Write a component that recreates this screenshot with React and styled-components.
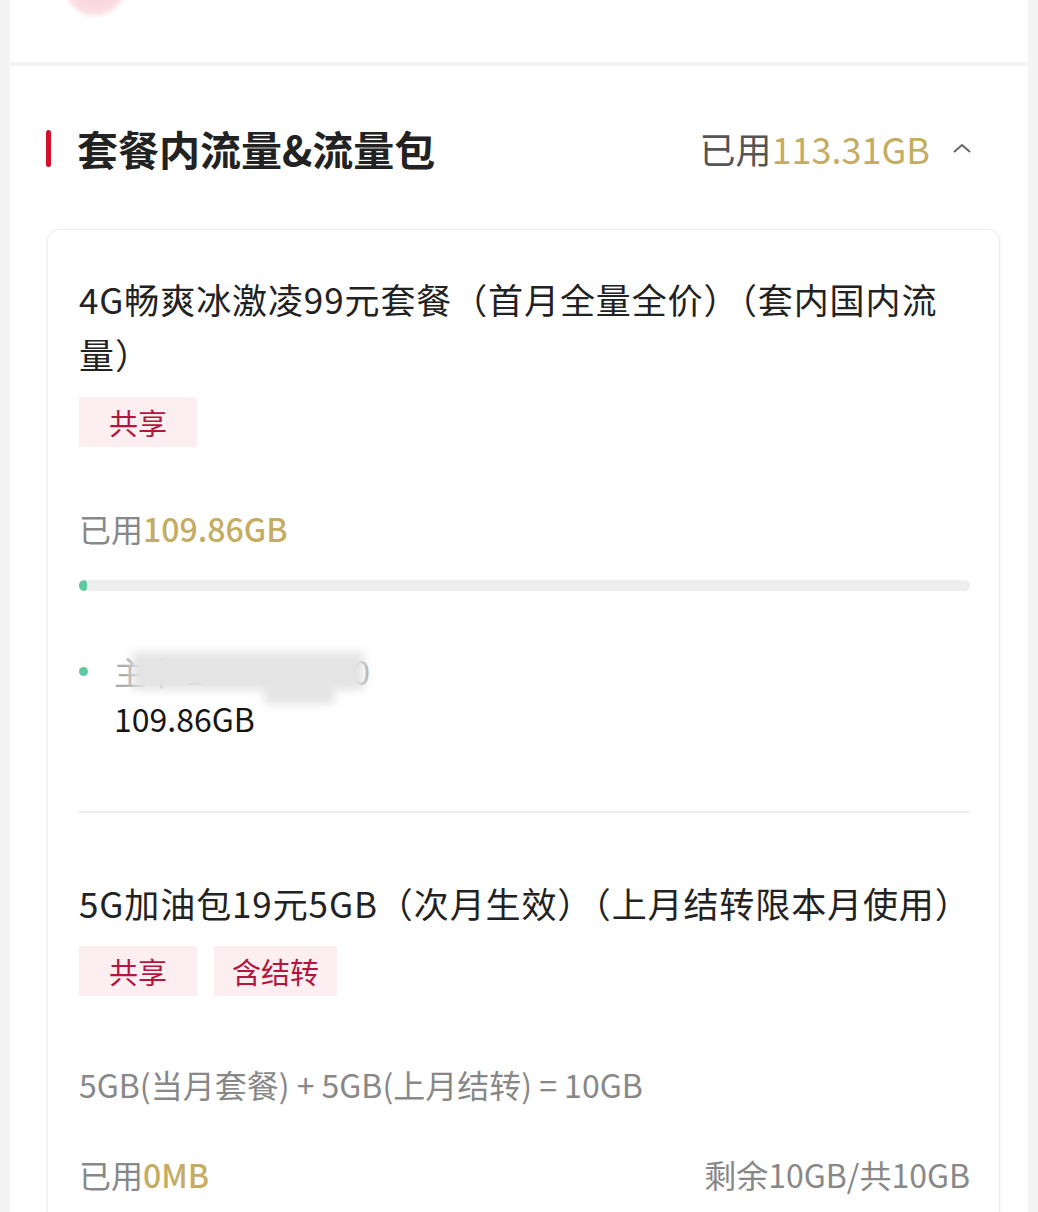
import styled, { createGlobalStyle } from "styled-components";

const GlobalStyle = createGlobalStyle`
  body {
    margin: 0;
    background: #f4f4f4;
    font-family: "Noto Sans CJK SC", "Noto Sans", sans-serif;
  }
`;

const Page = styled.div`
  width: 1038px;
  padding: 0 10px;
  box-sizing: border-box;
`;

const TopCard = styled.div`
  height: 62px;
  background: #fff;
  overflow: hidden;
`;

const Avatar = styled.div`
  width: 62px;
  height: 62px;
  margin: -46px 0 0 54px;
  border-radius: 50%;
  background: radial-gradient(circle at 50% 40%, #f7c9d2 0%, #f9dbe1 60%, #fdf1f3 100%);
  filter: blur(2px);
`;

const Section = styled.section`
  margin-top: 4px;
  background: #fff;
  padding: 60px 28px 60px 36px;
`;

const Header = styled.div`
  display: flex;
  align-items: center;
  justify-content: space-between;
  height: 44px;
  padding-right: 28px;
`;

const HeaderTitle = styled.h2`
  display: flex;
  align-items: center;
  gap: 26px;
  margin: 0;
  font-size: 41px;
  font-weight: 700;
  color: #222;
  &::before {
    content: "";
    width: 5px;
    height: 37px;
    border-radius: 3px;
    background: #d3112e;
  }
`;

const HeaderUsage = styled.div`
  display: flex;
  align-items: center;
  gap: 22px;
  font-size: 36px;
  color: #555;
`;

const Gold = styled.span`
  color: #c4ad62;
  font-weight: ${(p) => (p.$strong ? 500 : 400)};
`;

const Card = styled.div`
  margin: 59px 0 0 1px;
  border: 1px solid #ececec;
  border-radius: 12px;
  box-shadow: 0 0 6px rgba(0, 0, 0, 0.04);
  padding: 41px 29px 0 31px;
`;

const Item = styled.div`
  padding-bottom: ${(p) => p.$pb}px;
  & + & {
    border-top: 2px solid #eeeeee;
    padding-top: 62px;
  }
`;

const ItemTitle = styled.div`
  font-size: 35px;
  line-height: 55px;
  letter-spacing: 0.9px;
  color: #222;
  white-space: pre-line;
`;

const Tags = styled.div`
  display: flex;
  gap: 17px;
  margin-top: 16px;
`;

const Tag = styled.span`
  min-width: 118px;
  height: 50px;
  padding: 0 18px;
  box-sizing: border-box;
  display: flex;
  align-items: center;
  justify-content: center;
  background: #fdeef1;
  color: #b1163f;
  font-size: 29px;
`;

const Line = styled.div`
  display: flex;
  justify-content: space-between;
  margin-top: ${(p) => p.$mt}px;
  font-size: 32px;
  line-height: 42px;
  color: #888;
`;

const Bar = styled.div`
  margin-top: 31px;
  height: 11px;
  border-radius: 6px;
  background: #eeeeee;
  overflow: hidden;
`;

const BarFill = styled.div`
  height: 100%;
  border-radius: 6px;
  background: #5cc9a0;
`;

const Legend = styled.div`
  display: flex;
  gap: 26px;
  margin-top: 57px;
`;

const Dot = styled.span`
  flex: none;
  width: 9px;
  height: 9px;
  margin-top: 19px;
  border-radius: 50%;
  background: #5cc9a0;
`;

const LegendText = styled.div`
  position: relative;
  font-size: 32px;
  line-height: 47px;
`;

const LegendName = styled.div`
  color: #aaa;
`;

const LegendValue = styled.div`
  color: #151515;
`;

const Redact = styled.span`
  position: absolute;
  left: ${(p) => p.$x}px;
  top: ${(p) => p.$y}px;
  width: ${(p) => p.$w}px;
  height: ${(p) => p.$h}px;
  background: #e4e4e4;
  filter: blur(5px);
`;

function Chevron() {
  return (
    <svg width="20" height="12" viewBox="0 0 20 12">
      <polyline points="2,10 10,3 18,10" fill="none" stroke="#666" strokeWidth="2" />
    </svg>
  );
}

const items = [
  {
    title: "4G畅爽冰激凌99元套餐（首月全量全价）（套内国内流\n量）",
    tags: ["共享"],
  },
  {
    title: "5G加油包19元5GB（次月生效）（上月结转限本月使用）",
    tags: ["共享", "含结转"],
  },
];

export default function App() {
  return (
    <Page>
      <GlobalStyle />
      <TopCard>
        <Avatar />
      </TopCard>
      <Section>
        <Header>
          <HeaderTitle>套餐内流量&amp;流量包</HeaderTitle>
          <HeaderUsage>
            <span>
              已用<Gold>113.31GB</Gold>
            </span>
            <Chevron />
          </HeaderUsage>
        </Header>
        <Card>
          <Item $pb={69}>
            <ItemTitle>{items[0].title}</ItemTitle>
            <Tags>
              {items[0].tags.map((t) => (
                <Tag key={t}>{t}</Tag>
              ))}
            </Tags>
            <Line $mt={60}>
              <span>
                已用<Gold $strong>109.86GB</Gold>
              </span>
            </Line>
            <Bar>
              <BarFill style={{ width: "8px" }} />
            </Bar>
            <Legend>
              <Dot />
              <LegendText>
                <LegendName>主卡 1**********0</LegendName>
                <LegendValue>109.86GB</LegendValue>
                <Redact $x={18} $y={4} $w={232} $h={38} />
                <Redact $x={150} $y={30} $w={70} $h={26} />
              </LegendText>
            </Legend>
          </Item>
          <Item $pb={40}>
            <ItemTitle>{items[1].title}</ItemTitle>
            <Tags>
              {items[1].tags.map((t) => (
                <Tag key={t}>{t}</Tag>
              ))}
            </Tags>
            <Line $mt={67}>5GB(当月套餐) + 5GB(上月结转) = 10GB</Line>
            <Line $mt={48}>
              <span>
                已用<Gold $strong>0MB</Gold>
              </span>
              <span>剩余10GB/共10GB</span>
            </Line>
          </Item>
        </Card>
      </Section>
    </Page>
  );
}
